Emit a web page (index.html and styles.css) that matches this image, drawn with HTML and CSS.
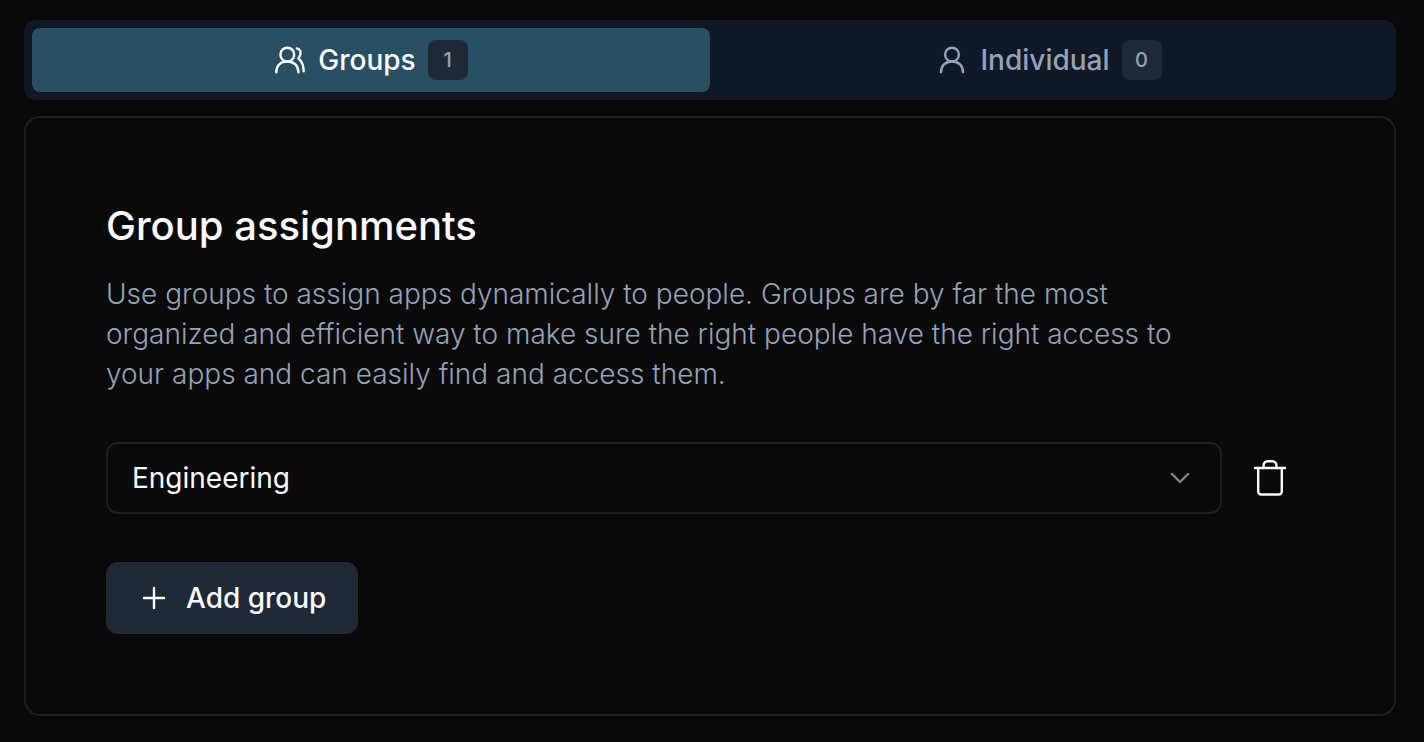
FILE: index.html
```html
<!DOCTYPE html>
<html lang="en">
<head>
    <meta charset="UTF-8">
    <meta name="viewport" content="width=device-width, initial-scale=1.0">
    <title>Assignments</title>
    <link rel="stylesheet" href="styles.css">
</head>
<body>
    <div class="tabs" role="tablist">
        <button class="tab active" type="button" role="tab" aria-selected="true" aria-controls="groupsPanel" id="groupsTab">
            <svg class="icon" viewBox="0 0 32 32" aria-hidden="true">
                <circle cx="13.3" cy="10.6" r="6.9"/>
                <path d="M2.3 28.2C2.3 21.6 6.6 17.5 13.3 17.5S24.4 21.6 24.4 28.2"/>
                <path d="M22.9 4.4C25.4 5.2 26.8 7.3 26.5 9.6C26.3 11.6 25.4 13 24.3 14.4C27.8 17 29.6 21.6 29.7 27.2"/>
            </svg>
            Groups
            <span class="badge">1</span>
        </button>
        <button class="tab" type="button" role="tab" aria-selected="false">
            <svg class="icon" viewBox="0 0 32 32" aria-hidden="true">
                <circle cx="16" cy="10.6" r="6.9"/>
                <path d="M5 28.2C5 21.6 9.4 17.5 16 17.5S27 21.6 27 28.2"/>
            </svg>
            Individual
            <span class="badge">0</span>
        </button>
    </div>

    <section class="card" id="groupsPanel" role="tabpanel" aria-labelledby="groupsTab">
        <h1>Group assignments</h1>
        <p>Use groups to assign apps dynamically to people. Groups are by far the most organized and efficient way to make sure the right people have the right access to your apps and can easily find and access them.</p>

        <div class="group-row">
            <div class="select-wrap">
                <select aria-label="Group">
                    <option>Engineering</option>
                </select>
                <svg class="chevron" viewBox="0 0 32 32" aria-hidden="true">
                    <path d="M8 12L16 20L24 12"/>
                </svg>
            </div>
            <button class="delete-btn" type="button" aria-label="Remove group">
                <svg viewBox="0 0 40 40" aria-hidden="true">
                    <path d="M5 10H35"/>
                    <path d="M8.200 10V33.500A3 3 0 0 0 11.200 36.500H28.800A3 3 0 0 0 31.800 33.500V10"/>
                    <path d="M13.600 10V7.200A4 4 0 0 1 17.600 3.200H22.400A4 4 0 0 1 26.400 7.200V10"/>
                </svg>
            </button>
        </div>

        <button class="add-btn" type="button">
            <svg class="icon" viewBox="0 0 32 32" aria-hidden="true">
                <path d="M16 6V26M6 16H26"/>
            </svg>
            Add group
        </button>
    </section>
</body>
</html>
```
FILE: styles.css
```css
* {
    box-sizing: border-box;
}
body {
    margin: 0;
    padding: 20px 28px 24px 24px;
    background-color: #0a0a0a;
    color: #fafafa;
    font-family: Inter, sans-serif;
    font-size: 28px;
    line-height: 40px;
}
button, select {
    font: inherit;
    color: inherit;
    border: none;
    cursor: pointer;
}
svg {
    display: block;
    flex-shrink: 0;
    fill: none;
    stroke: currentColor;
    stroke-width: 2.4;
    stroke-linecap: round;
    stroke-linejoin: round;
}
.icon {
    width: 32px;
    height: 32px;
}
.tabs {
    display: grid;
    grid-template-columns: 1fr 1fr;
    padding: 8px;
    margin-bottom: 16px;
    background-color: #111827;
    border-radius: 12px;
}
.tab {
    display: flex;
    align-items: center;
    justify-content: center;
    gap: 12px;
    padding: 12px 24px;
    background: none;
    border-radius: 8px;
    color: #94a3b8;
    font-weight: 500;
}
.tab.active {
    background-color: #294f63;
    color: #fafafa;
}
.badge {
    width: 40px;
    height: 40px;
    border-radius: 8px;
    background-color: #1f2937;
    color: #94a3b8;
    font-size: 20px;
    text-align: center;
}
.card {
    padding: 80px;
    border: 2px solid #1f1f23;
    border-radius: 16px;
}
h1 {
    margin: 0 0 20px;
    font-size: 40px;
    font-weight: 500;
    line-height: 56px;
}
p {
    max-width: 1116px;
    margin: 0 0 48px;
    color: #94a3b8;
    font-weight: 300;
}
.group-row {
    display: flex;
    align-items: center;
    gap: 4px;
    margin-bottom: 48px;
}
.select-wrap {
    position: relative;
    flex: 1;
}
select {
    display: block;
    width: 100%;
    height: 72px;
    padding: 0 72px 0 24px;
    appearance: none;
    background-color: #0a0a0a;
    border: 2px solid #1f1f23;
    border-radius: 12px;
}
.chevron {
    position: absolute;
    top: 20px;
    right: 26px;
    width: 32px;
    height: 32px;
    color: #858585;
    pointer-events: none;
}
.delete-btn {
    padding: 16px 24px;
    background: none;
}
.delete-btn svg {
    width: 40px;
    height: 40px;
}
.add-btn {
    display: flex;
    align-items: center;
    gap: 16px;
    padding: 16px 32px;
    background-color: #1f2937;
    border-radius: 12px;
    font-weight: 500;
}
```
